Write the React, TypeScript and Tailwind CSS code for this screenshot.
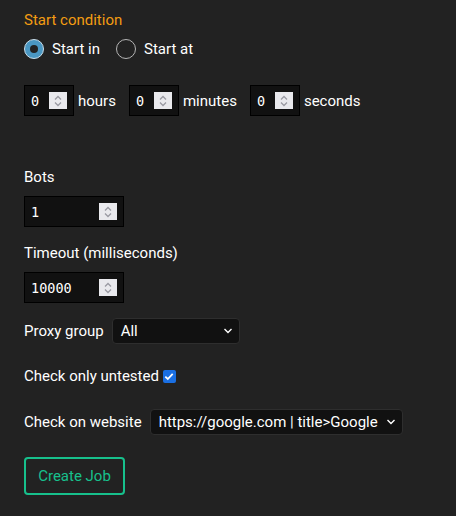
import React from "react"

function Spinner() {
    return (
        <span className="flex h-[17px] w-[18px] flex-col items-center justify-center bg-[#e9e9ed]">
            <svg width="10" height="14" viewBox="0 0 10 14" fill="none" stroke="#9a9aa2" strokeWidth="1.3">
                <path d="M2 5.5 L5 2.5 L8 5.5" />
                <path d="M2 8.5 L5 11.5 L8 8.5" />
            </svg>
        </span>
    )
}

function NumberBox({ value, width }: { value: string; width: string }) {
    return (
        <div className={`flex h-[31px] ${width} items-center justify-between border border-black bg-[#111111] pl-[6px] pr-[6px]`}>
            <span className="font-['DejaVu_Sans_Mono',monospace] text-[13.5px] text-white">{value}</span>
            <Spinner />
        </div>
    )
}

function Chevron() {
    return (
        <svg width="10" height="6" viewBox="0 0 10 6" fill="none" stroke="#ffffff" strokeWidth="1.4">
            <path d="M1.5 1 L5 4.5 L8.5 1" />
        </svg>
    )
}

function Radio({ checked, label }: { checked: boolean; label: string }) {
    return (
        <label className="flex items-center gap-[8px]">
            {checked ? (
                <span className="flex h-[20px] w-[20px] items-center justify-center rounded-full border border-[#c9dde9] bg-[#4a97c2]">
                    <span className="h-[8px] w-[8px] rounded-full bg-[#222222]" />
                </span>
            ) : (
                <span className="h-[20px] w-[20px] rounded-full border-[1.5px] border-[#b5b5b5] bg-[#222222]" />
            )}
            <span>{label}</span>
        </label>
    )
}

export default function App() {
    return (
        <div className="min-h-[516px] bg-[#222222] px-[24px] pt-[10px] font-['Roboto',sans-serif] text-[15px] leading-[20px] text-white">
            <div className="text-[#f39c12]">Start condition</div>

            <div className="mt-[9px] flex items-center gap-[16px]">
                <Radio checked label="Start in" />
                <Radio checked={false} label="Start at" />
            </div>

            <div className="mt-[26px] flex items-center">
                <NumberBox value="0" width="w-[50px]" />
                <span className="ml-[4px]">hours</span>
                <span className="ml-[13px]"><NumberBox value="0" width="w-[50px]" /></span>
                <span className="ml-[4px]">minutes</span>
                <span className="ml-[13px]"><NumberBox value="0" width="w-[50px]" /></span>
                <span className="ml-[4px]">seconds</span>
            </div>

            <div className="mt-[51px]">Bots</div>
            <div className="mt-[9px]">
                <NumberBox value="1" width="w-[100px]" />
            </div>

            <div className="mt-[16px]">Timeout (milliseconds)</div>
            <div className="mt-[9px]">
                <NumberBox value="10000" width="w-[100px]" />
            </div>

            <div className="mt-[15px] flex items-center gap-[8px]">
                <span>Proxy group</span>
                <div className="flex h-[26px] w-[128px] items-center justify-between rounded-[4px] border border-[#2e2e2e] bg-[#111111] pl-[8px] pr-[6px]">
                    <span>All</span>
                    <Chevron />
                </div>
            </div>

            <div className="mt-[22px] flex items-center gap-[4px]">
                <span>Check only untested</span>
                <span className="flex h-[13px] w-[13px] items-center justify-center rounded-[2px] bg-[#1a6fe3]">
                    <svg width="10" height="9" viewBox="0 0 10 9" fill="none" stroke="#ffffff" strokeWidth="1.8">
                        <path d="M1.3 4.6 L3.8 7 L8.7 1.8" />
                    </svg>
                </span>
            </div>

            <div className="mt-[23px] flex items-center gap-[8px]">
                <span>Check on website</span>
                <div className="flex h-[26px] w-[253px] items-center justify-between rounded-[4px] border border-[#2e2e2e] bg-[#111111] pl-[8px] pr-[6px]">
                    <span>https://google.com | title&gt;Google</span>
                    <Chevron />
                </div>
            </div>

            <button className="mt-[22px] h-[38px] w-[101px] rounded-[4px] border-2 border-[#17c08c] text-[#17c08c]">
                Create Job
            </button>
        </div>
    )
}
